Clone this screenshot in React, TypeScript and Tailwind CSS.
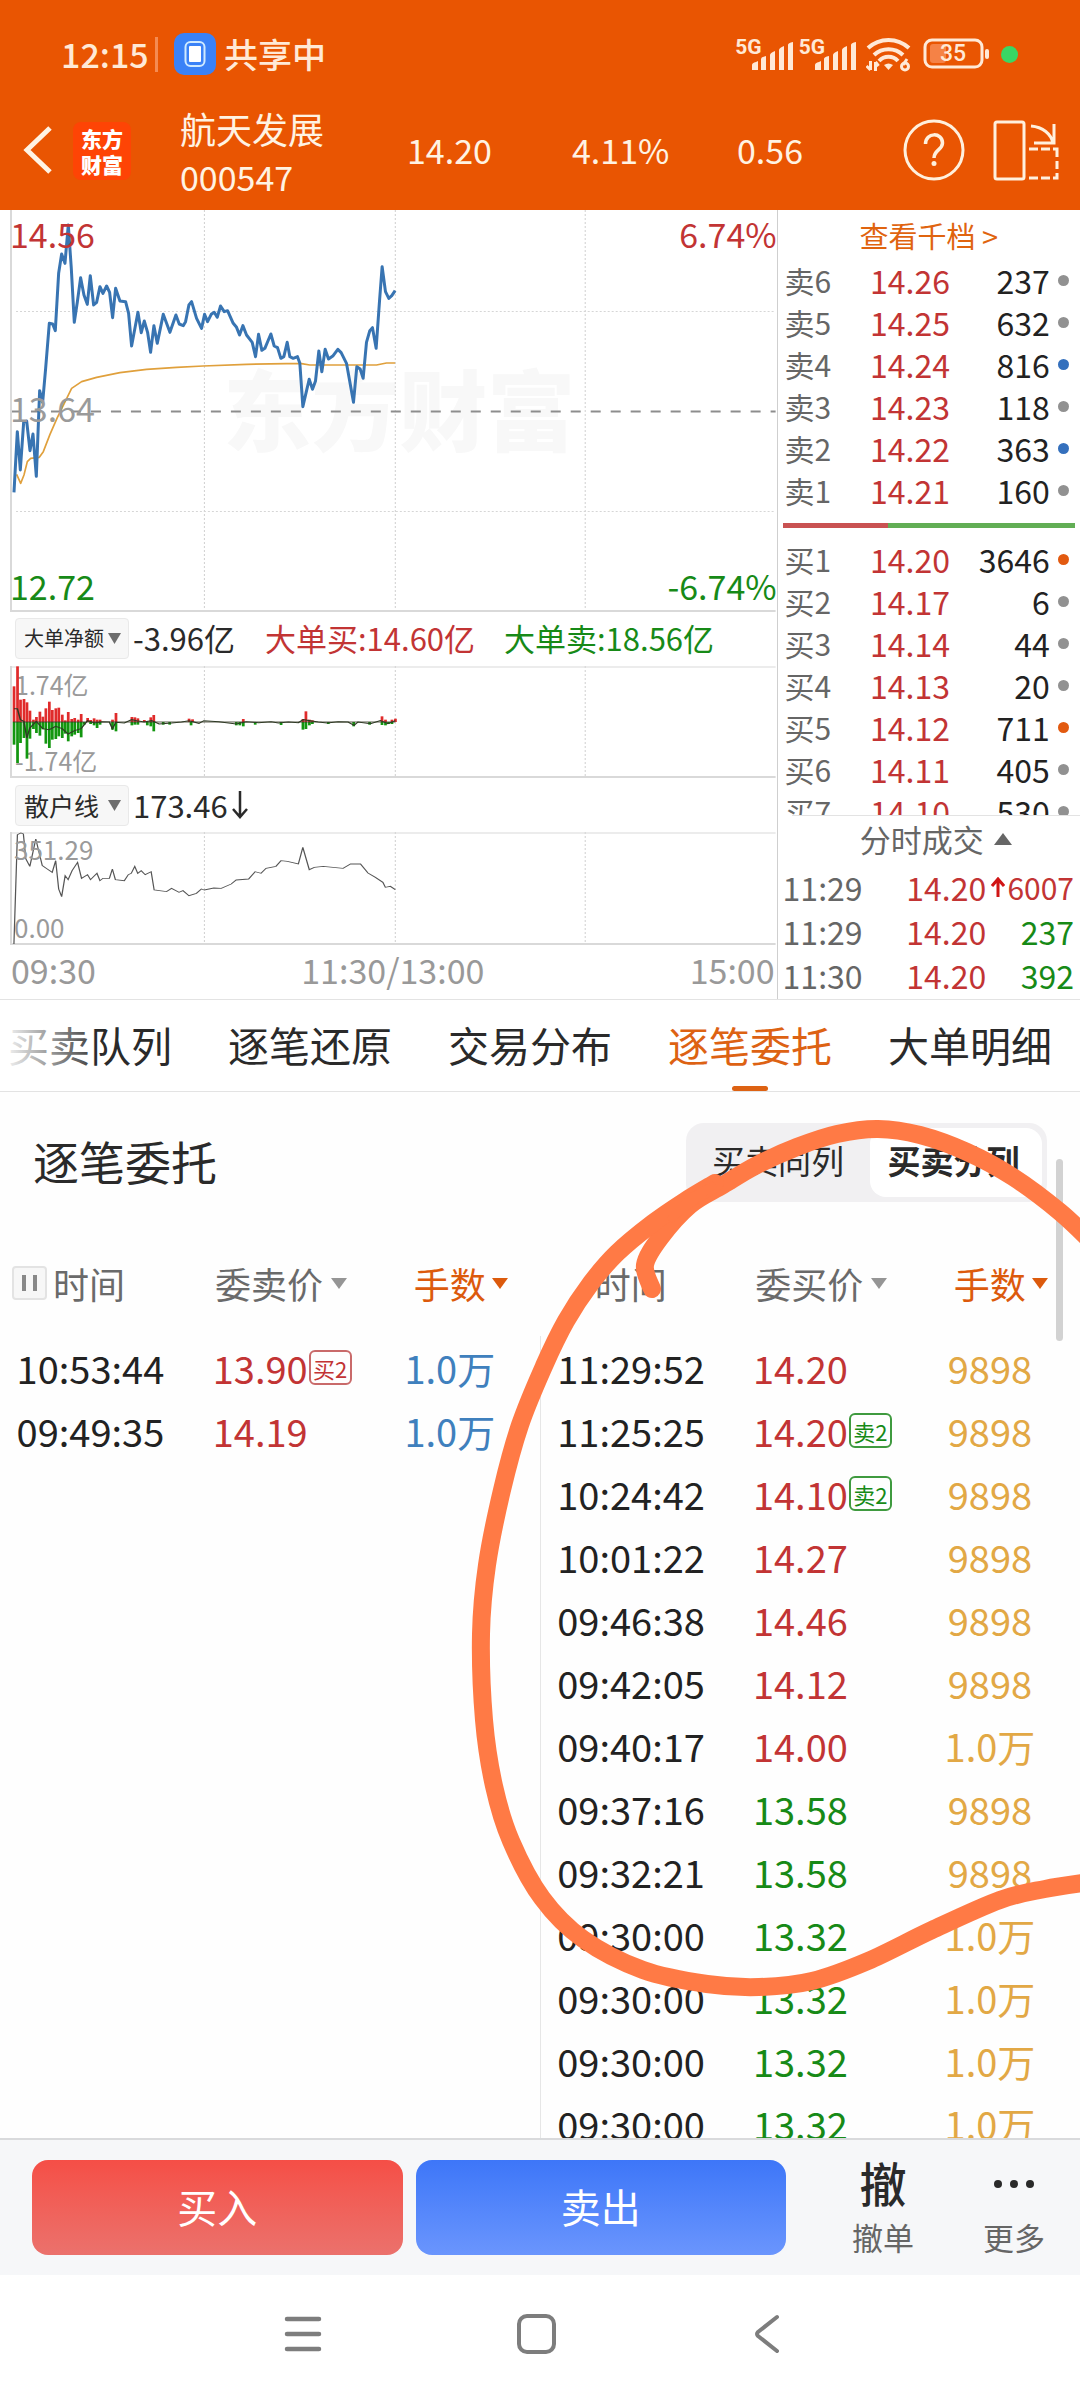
import React from "react";

type Pt = [number, number];

const parse = (s: string): Pt[] => s.split(" ").map((p) => p.split(",").map(Number) as Pt);

const smooth = (pts: Pt[]): string => {
  let d = `M${pts[0][0]} ${pts[0][1]}`;
  for (let i = 0; i < pts.length - 1; i++) {
    const p0 = pts[i - 1] ?? pts[i];
    const p1 = pts[i];
    const p2 = pts[i + 1];
    const p3 = pts[i + 2] ?? p2;
    d += `C${p1[0] + (p2[0] - p0[0]) / 6} ${p1[1] + (p2[1] - p0[1]) / 6} ${p2[0] - (p3[0] - p1[0]) / 6} ${p2[1] - (p3[1] - p1[1]) / 6} ${p2[0]} ${p2[1]}`;
  }
  return d;
};

const PRICE =
  "42,862 52,680 61,795 71,652 80,648 90,737 99,687 109,814 119,557 128,592 137,490 148,355 158,357 166,377 176,205 185,147 195,175 205,60 214,190 223,352 232,292 242,218 252,270 262,298 271,212 281,300 290,292 300,245 309,265 320,243 329,262 338,338 347,250 360,288 377,290 386,325 395,423 414,322 424,383 433,348 443,382 452,442 462,362 472,415 490,328 510,382 528,330 538,357 550,362 557,350 567,300 575,290 590,340 605,370 614,328 623,350 634,328 643,322 652,337 662,303 673,320 683,317 700,355 710,367 719,390 729,362 740,390 757,412 767,455 776,388 786,436 795,430 813,387 823,423 833,428 843,460 852,455 862,412 870,455 880,460 893,455 900,475 909,605 928,523 938,553 947,528 957,438 966,500 976,433 986,462 1000,452 1014,433 1024,443 1040,475 1050,530 1061,592 1071,485 1081,492 1090,520 1100,412 1110,377 1118,368 1129,430 1139,290 1147,185 1157,260 1167,280 1176,272 1186,257";
const AVERAGE =
  "50,808 62,835 72,810 82,770 92,760 118,757 130,740 150,688 172,638 215,550 245,530 290,517 360,503 440,493 530,487 610,483 740,478 860,476 905,476 930,480 1130,480 1160,474 1186,474";
const BUY_BARS = parse(
  "28,245 35,185 41,285 48,283 54,293 60,318 67,345 73,337 80,321 86,336 92,311 99,291 105,316 112,311 118,309 125,330 131,347 137,322 144,343 150,340 157,345 163,328 176,340 182,346 189,341 195,345 201,345 226,345 233,325 265,337 271,338 277,341 290,346 303,338 309,331 380,342 387,344 489,343 609,343 615,320 622,345 628,347 768,335 775,345 788,345 795,342"
);
const SELL_BARS = parse(
  "28,420 35,475 41,415 48,400 54,462 60,402 67,373 73,385 80,393 86,374 92,417 99,430 105,405 112,403 118,395 125,400 131,387 137,410 144,395 150,390 157,385 163,398 169,360 182,358 189,362 195,370 201,360 226,375 233,380 265,362 271,360 277,360 296,362 303,365 309,380 328,360 341,360 384,362 475,362 482,362 489,365 513,360 565,361 609,375 615,373 622,362 628,358 660,358 711,365 743,360 768,361 775,362 781,358 788,358"
);
const NET =
  "28,312 35,312 41,345 48,350 54,400 60,370 73,350 86,372 99,375 112,365 125,372 137,388 150,378 163,372 176,348 190,355 205,351 220,352 226,372 233,353 250,355 265,345 275,348 290,352 305,348 320,358 345,355 365,352 380,348 400,356 410,348 440,351 475,358 495,351 520,354 545,351 560,355 580,352 600,354 610,345 640,352 658,355 680,351 700,352 712,362 720,352 745,357 765,348 780,357 795,348";
const RETAIL =
  "28,1020 35,692 42,687 47,690 52,765 60,787 72,705 85,785 95,795 105,805 112,770 118,855 124,878 131,815 137,827 145,800 156,775 164,823 176,812 182,827 195,808 201,830 207,823 220,823 226,795 232,827 250,830 258,812 264,808 271,787 277,808 284,800 292,812 304,803 310,858 335,863 345,853 360,865 368,860 380,875 395,868 405,855 411,858 430,852 445,853 465,840 475,828 500,825 513,803 525,808 535,793 555,787 565,770 578,772 600,780 609,730 622,797 632,790 650,787 690,793 705,780 725,780 740,807 755,820 770,835 775,850 785,847 795,857";

const STROKE_A = smooth(
  parse("652,1289 645,1265 660,1238 690,1205 723,1185 757,1165 797,1147 837,1134 878,1129 920,1135 967,1152 1013,1177 1060,1212 1095,1245")
);
const STROKE_B = smooth(
  parse(
    "715,1183 685,1201 653,1223 617,1253 591,1283 566,1321 544,1366 520,1425 502,1490 487,1565 481,1634 484,1720 494,1786 511,1841 542,1898 583,1939 643,1970 707,1984 759,1987 812,1981 868,1961 932,1930 1000,1900 1045,1889 1090,1882"
  )
);

const SELLS: [string, string, string, string][] = [
  ["卖6", "14.26", "237", "g"],
  ["卖5", "14.25", "632", "g"],
  ["卖4", "14.24", "816", "b"],
  ["卖3", "14.23", "118", "g"],
  ["卖2", "14.22", "363", "b"],
  ["卖1", "14.21", "160", "g"],
];
const BUYS: [string, string, string, string][] = [
  ["买1", "14.20", "3646", "o"],
  ["买2", "14.17", "6", "g"],
  ["买3", "14.14", "44", "g"],
  ["买4", "14.13", "20", "g"],
  ["买5", "14.12", "711", "o"],
  ["买6", "14.11", "405", "g"],
  ["买7", "14.10", "530", "g"],
];
const DOT: Record<string, string> = { g: "bg-[#919191]", b: "bg-[#3470bd]", o: "bg-[#e25a10]" };

type Order = { time: string; price: string; up: boolean; badge?: string; lots: string };
const SELL_ORDERS: Order[] = [
  { time: "10:53:44", price: "13.90", up: true, badge: "买2", lots: "1.0万" },
  { time: "09:49:35", price: "14.19", up: true, lots: "1.0万" },
];
const BUY_ORDERS: Order[] = [
  { time: "11:29:52", price: "14.20", up: true, lots: "9898" },
  { time: "11:25:25", price: "14.20", up: true, badge: "卖2", lots: "9898" },
  { time: "10:24:42", price: "14.10", up: true, badge: "卖2", lots: "9898" },
  { time: "10:01:22", price: "14.27", up: true, lots: "9898" },
  { time: "09:46:38", price: "14.46", up: true, lots: "9898" },
  { time: "09:42:05", price: "14.12", up: true, lots: "9898" },
  { time: "09:40:17", price: "14.00", up: true, lots: "1.0万" },
  { time: "09:37:16", price: "13.58", up: false, lots: "9898" },
  { time: "09:32:21", price: "13.58", up: false, lots: "9898" },
  { time: "09:30:00", price: "13.32", up: false, lots: "1.0万" },
  { time: "09:30:00", price: "13.32", up: false, lots: "1.0万" },
  { time: "09:30:00", price: "13.32", up: false, lots: "1.0万" },
  { time: "09:30:00", price: "13.32", up: false, lots: "1.0万" },
];

const Signal = () => (
  <div className="flex h-[34px] items-start text-[#ffe9d6]">
    <span className="font-[Roboto,sans-serif] text-[21px] font-bold leading-[20px]">5G</span>
    <svg className="-ml-[10px] h-[34px] w-[42px]" viewBox="0 0 42 34" fill="currentColor">
      <path d="M0 33v-5q0-2 4-3l2-1v9zM9 33V22q0-2 5-3v14zM18 33V18q0-2 5-4v19zM27 33V13q0-2 5-4v24zM36 33V8q0-2 5-3v28z" />
    </svg>
  </div>
);

const StatusBar = () => (
  <div className="flex h-[108px] items-center pl-[61px] pr-[62px] text-[#ffe9d6]">
    <span className="w-[82px] text-[34px] font-medium leading-none">12:15</span>
    <span className="ml-3 h-[35px] w-[3px] bg-[#f58b52]" />
    <svg className="ml-[16px] size-[42px]" viewBox="0 0 42 42">
      <rect width="42" height="42" rx="10" fill="#3a82f7" />
      <rect x="11.5" y="9" width="19" height="24" rx="5" fill="none" stroke="#cfeaff" strokeWidth="2" />
      <rect x="15" y="13" width="12" height="16" rx="1" fill="#fff" />
    </svg>
    <span className="ml-[8px] text-[34px] font-medium leading-none">共享中</span>
    <div className="ml-auto flex items-center">
      <Signal />
      <div className="w-[5px]" />
      <Signal />
      <svg className="ml-[9px] h-[36px] w-[46px]" viewBox="0 0 46 36" fill="none" stroke="#ffe9d6" strokeWidth="4">
        <path d="M2 12a30 30 0 0 1 41 0" />
        <path d="M8 19a21 21 0 0 1 29 0" />
        <path d="M13 25a13 13 0 0 1 19 0" />
        <path d="M18 29q4.500-3 9 0l-4.500 5z" fill="#ffe9d6" stroke="none" />
        <path d="M4.500 25v9m0 0l-4-4M9.500 35v-9m0 0l3 4" strokeWidth="3" />
        <path d="M41 23l-4 6" strokeWidth="3" />
        <circle cx="39" cy="30.500" r="3.500" strokeWidth="3" />
      </svg>
      <div className="relative ml-[11px] h-[32px] w-[68px]">
        <svg className="h-[32px] w-[68px]" viewBox="0 0 68 32">
          <rect x="2" y="2" width="57" height="27" rx="7" fill="none" stroke="#ffe9d6" strokeWidth="3" />
          <rect x="7" y="6" width="16" height="19" rx="3" fill="#f58246" />
          <rect x="62" y="11" width="4" height="10" rx="2" fill="#ffe9d6" />
        </svg>
        <span className="absolute inset-0 pr-[8px] text-center font-[Roboto,sans-serif] text-[23px] font-medium leading-[31px]">35</span>
      </div>
      <span className="ml-[10px] size-[17px] rounded-full bg-[#3ad764]" />
    </div>
  </div>
);

const Header = () => (
  <header className="flex h-[102px] items-start pl-[22px] pr-[20px] text-[#fff3e3]">
    <button aria-label="返回" className="mt-[17px]">
      <svg className="h-[50px] w-[32px]" viewBox="0 0 32 50" fill="none" stroke="#fff3e3" strokeWidth="5">
        <path d="M28 3L5 25l23 22" />
      </svg>
    </button>
    <div className="ml-[19px] mt-[14px] flex size-[58px] flex-col items-center justify-center rounded-lg bg-[#fe4405] text-[21px] font-black leading-[26px] text-white">
      <span>东方</span>
      <span>财富</span>
    </div>
    <div className="ml-[49px] w-[227px]">
      <div className="text-[36px] leading-[40px]">航天发展</div>
      <div className="mt-1 text-[34px] leading-[50px]">000547</div>
    </div>
    <div className="flex flex-1 pt-[18px] text-[34px] leading-[48px]">
      <span className="w-[165px]">14.20</span>
      <span className="w-[165px]">4.11%</span>
      <span>0.56</span>
    </div>
    <button aria-label="帮助" className="mt-[11px]">
      <svg className="size-[62px]" viewBox="0 0 62 62" fill="none" stroke="#fff0dd" strokeWidth="3">
        <circle cx="31" cy="31" r="29" />
        <path d="M22.500 25c0-12 17-12 17-1 0 7-8.500 7-8.500 15" strokeWidth="3.500" />
        <circle cx="31" cy="44.500" r="2.500" fill="#fff0dd" stroke="none" />
      </svg>
    </button>
    <button aria-label="横屏" className="ml-[27px] mt-[11px]">
      <svg className="h-[62px] w-[68px]" viewBox="0 0 68 62" fill="none" stroke="#fff0dd" strokeWidth="3">
        <rect x="3" y="3" width="29" height="57" rx="2" />
        <path d="M37 30h9M49 30h9M61 30h4v8M65 42v8M65 54v5h-4M58 59h-9M46 59h-9" />
        <path d="M39 7c12 1 20 8 22 17M62 5v19H42" />
      </svg>
    </button>
  </header>
);

const Grid = ({ h }: { h: number }) => (
  <g stroke="#cfcfcf" strokeWidth="1" strokeDasharray="2 2">
    <path d={`M204.500 0V${h}M395.500 0V${h}M585.500 0V${h}`} />
  </g>
);

const Frame = ({ h, top }: { h: number; top: boolean }) => (
  <g fill="none" stroke="#d9d9d9" strokeWidth="2">
    <path d={`M11 0V${h - 1}H776`} />
    {top && <path d="M11 1H776" strokeWidth="1" />}
  </g>
);

const Picker = ({ label, size }: { label: string; size: string }) => (
  <button className="flex h-[41px] w-[114px] items-center justify-between rounded border border-[#e9e9e9] bg-[#f7f7f7] pl-2 pr-[7px] text-[#2a2a2a]">
    <span className={size}>{label}</span>
    <svg className="h-[11px] w-[13px]" viewBox="0 0 13 11" fill="#6d6d6d">
      <path d="M0 0h13L6.500 11z" />
    </svg>
  </button>
);

const Charts = () => (
  <section className="min-w-0 flex-1 border-r border-[#cfcfcf] bg-white">
    <div className="relative h-[402px]">
      <div className="absolute inset-x-0 top-[132px] pl-[22px] text-center text-[88px] font-black leading-[128px] text-[#f8f8f8]">东方财富</div>
      <svg className="absolute inset-0 h-full w-full" viewBox="0 0 777 402" preserveAspectRatio="none">
        <Grid h={402} />
        <path d="M16 101.500H776M16 301.500H776" stroke="#d6d6d6" strokeDasharray="2 2" />
        <path d="M11 201.500H776" stroke="#8d8d8d" strokeWidth="2" strokeDasharray="10 10" />
        <Frame h={402} top={false} />
        <g transform="translate(0 -5) scale(.33333)" fill="none" strokeLinejoin="round">
          <polyline points={AVERAGE} stroke="#e0a03c" strokeWidth="5" />
          <polyline points={PRICE} stroke="#3874b2" strokeWidth="9" />
        </g>
      </svg>
      <div className="absolute left-[10px] right-0 top-0 flex justify-between text-[34px] leading-[48px] text-[#c23434]">
        <span>14.56</span>
        <span>6.74%</span>
      </div>
      <div className="absolute left-[10px] top-[174px] text-[34px] leading-[48px] text-[#9a9a9a]">13.64</div>
      <div className="absolute bottom-[2px] left-[10px] right-0 flex justify-between text-[34px] leading-[48px] text-[#178a17]">
        <span>12.72</span>
        <span>-6.74%</span>
      </div>
    </div>
    <div className="flex h-[54px] items-center whitespace-nowrap pb-[2px] pl-[15px] text-[31px] leading-[44px] text-[#2a2a2a]">
      <Picker label="大单净额" size="text-[20px]" />
      <span className="ml-1 w-[132px]">-3.96亿</span>
      <span className="w-[239px] text-[#c23434]">大单买:14.60亿</span>
      <span className="text-[#178a17]">大单卖:18.56亿</span>
    </div>
    <div className="relative h-[112px]">
      <svg className="absolute inset-0 h-full w-full" viewBox="0 0 777 112" preserveAspectRatio="none">
        <Grid h={112} />
        <Frame h={112} top />
      </svg>
      <div className="absolute left-[15px] top-0 text-[25px] leading-[36px] text-[#9a9a9a]">1.74亿</div>
      <div className="absolute bottom-0 left-[15px] text-[25px] leading-[36px] text-[#9a9a9a]">-1.74亿</div>
      <svg className="absolute inset-0 h-full w-full" viewBox="0 0 777 112" preserveAspectRatio="none">
        <g transform="scale(.4975 .33333) translate(0 -184)">
          {BUY_BARS.map(([x, y]) => (
            <rect key={x} x={x - 2.5} y={y} width="5.500" height={352 - y} fill="#e02b2b" />
          ))}
          {SELL_BARS.map(([x, y]) => (
            <rect key={x} x={x - 2.5} y={352} width="5.500" height={y - 352} fill="#12960f" />
          ))}
          <path d="M26 352H795" stroke="#3d3d2c" strokeWidth="2" />
          <polyline points={NET} fill="none" stroke="#2f3a25" strokeWidth="3" />
        </g>
      </svg>
    </div>
    <div className="flex h-[54px] items-center pl-[15px] text-[31px] leading-[44px] text-[#2a2a2a]">
      <Picker label="散户线" size="text-[25px]" />
      <span className="ml-1">173.46</span>
      <svg className="ml-[4px] h-[28px] w-[16px]" viewBox="0 0 16 28" fill="none" stroke="#2a2a2a" strokeWidth="2.500">
        <path d="M8 0v26M1 18l7 8 7-8" />
      </svg>
    </div>
    <div className="relative h-[113px]">
      <svg className="absolute inset-0 h-full w-full" viewBox="0 0 777 113" preserveAspectRatio="none">
        <Grid h={113} />
        <Frame h={113} top />
        <g transform="scale(.4975 .33333) translate(0 -684)">
          <polyline points={RETAIL} fill="none" stroke="#555" strokeWidth="2.500" />
        </g>
      </svg>
      <div className="absolute left-[14px] top-0 text-[26px] leading-[34px] text-[#9a9a9a]">351.29</div>
      <div className="absolute bottom-0 left-[14px] text-[26px] leading-[36px] text-[#9a9a9a]">0.00</div>
    </div>
    <div className="flex h-[53px] justify-between pl-[11px] pr-[2px] text-[34px] leading-[50px] text-[#999]">
      <span>09:30</span>
      <span>11:30/13:00</span>
      <span>15:00</span>
    </div>
  </section>
);

const Levels = ({ rows }: { rows: [string, string, string, string][] }) => (
  <table className="w-full table-fixed text-[32px] leading-[42px]">
    <colgroup>
      <col className="w-[20%]" />
      <col className="w-[37%]" />
      <col className="w-[33%]" />
      <col className="w-[10%]" />
    </colgroup>
    <tbody>
      {rows.map(([name, price, qty, dot]) => (
        <tr key={name} className="h-[42px]">
          <td className="whitespace-nowrap p-0 pl-[7px] text-[30px] text-[#666]">{name}</td>
          <td className="p-0 text-right text-[#c23434]">{price}</td>
          <td className="p-0 text-right text-[#222]">{qty}</td>
          <td className="p-0 pl-[8px]">
            <span className={`block size-[11px] rounded-full ${DOT[dot]}`} />
          </td>
        </tr>
      ))}
    </tbody>
  </table>
);

const OrderBook = () => (
  <aside className="flex w-[28%] flex-col bg-white">
    <a href="#depth" className="block h-[49px] text-center text-[29px] leading-[50px] text-[#e0640f]">
      查看千档 &gt;
    </a>
    <Levels rows={SELLS} />
    <div className="mx-[5px] mb-[10px] mt-[12px] flex h-[5px]">
      <div className="w-[36%] bg-[#c95252]" />
      <div className="flex-1 bg-[#62ae55]" />
    </div>
    <div className="h-[277px] overflow-hidden">
      <Levels rows={BUYS} />
    </div>
    <button className="ml-[14px] flex h-[50px] items-center justify-center gap-[10px] border-t border-[#e3e3e3] pb-1 text-[31px] leading-[44px] text-[#666]">
      <span>分时成交</span>
      <svg className="h-[12px] w-[18px]" viewBox="0 0 18 12" fill="#666">
        <path d="M9 0l9 12H0z" />
      </svg>
    </button>
    <table className="w-full table-fixed text-[32px] leading-[44px]">
      <colgroup>
        <col className="w-[36%]" />
        <col className="w-[33%]" />
        <col className="w-[31%]" />
      </colgroup>
      <tbody className="text-right">
        <tr className="h-[44px]">
          <td className="p-0 pl-[5px] text-left text-[#666]">11:29</td>
          <td className="p-0 text-[#c23434]">14.20</td>
          <td className="p-0 pr-[6px] text-[30px] text-[#c23434]">
            <span className="flex items-center justify-end gap-[2px]">
              <svg className="h-[20px] w-[14px]" viewBox="0 0 14 20" fill="none" stroke="#d01515" strokeWidth="3">
                <path d="M7 20V2M1 9l6-7 6 7" />
              </svg>
              6007
            </span>
          </td>
        </tr>
        <tr className="h-[44px]">
          <td className="p-0 pl-[5px] text-left text-[#666]">11:29</td>
          <td className="p-0 text-[#c23434]">14.20</td>
          <td className="p-0 pr-[6px] text-[#178a17]">237</td>
        </tr>
        <tr className="h-[44px]">
          <td className="p-0 pl-[5px] text-left text-[#666]">11:30</td>
          <td className="p-0 text-[#c23434]">14.20</td>
          <td className="p-0 pr-[6px] text-[#178a17]">392</td>
        </tr>
      </tbody>
    </table>
  </aside>
);

const Tabs = () => (
  <nav className="relative flex h-[93px] items-start justify-between whitespace-nowrap border-b border-t border-[#e3e3e3] bg-white pl-[8px] pr-[28px] pt-[14px] text-[41px] leading-[60px] text-[#2a2a2a]">
    <button>买卖队列</button>
    <button>逐笔还原</button>
    <button>交易分布</button>
    <button className="relative text-[#dd6213]">
      逐笔委托
      <span className="absolute -bottom-[17px] left-1/2 h-[5px] w-[36px] -translate-x-1/2 rounded bg-[#dd6213]" />
    </button>
    <button>大单明细</button>
    <div className="pointer-events-none absolute inset-y-0 left-0 w-[95px] bg-gradient-to-r from-white to-white/10" />
  </nav>
);

const Caret = ({ color }: { color: string }) => (
  <svg className="h-[11px] w-[16px]" viewBox="0 0 16 11" fill={color}>
    <path d="M0 0h16L8 11z" />
  </svg>
);

const Orders = ({ side, rows, pause }: { side: string; rows: Order[]; pause?: boolean }) => (
  <table className="w-full table-fixed border-collapse self-start whitespace-nowrap text-[38px] leading-[60px]">
    <colgroup>
      <col className="w-[33.500%]" />
      <col className="w-[32%]" />
      <col className="w-[34.500%]" />
    </colgroup>
    <thead>
      <tr className="h-[104px] text-[36px] text-[#6a6a6a]">
        <th className="p-0 pb-[2px] font-normal">
          {pause ? (
            <div className="flex items-center gap-[6px] pl-[12px]">
              <button aria-label="暂停" className="flex h-[34px] w-[35px] items-center justify-center gap-[7px] rounded border-2 border-[#e3e3e3] bg-[#f7f7f7]">
                <span className="h-[16px] w-[4px] bg-[#888]" />
                <span className="h-[16px] w-[4px] bg-[#888]" />
              </button>
              时间
            </div>
          ) : (
            "时间"
          )}
        </th>
        <th className="p-0 pb-[2px] font-normal">
          <button className="flex items-center gap-2 pl-[34px]">
            {side}
            <Caret color="#959595" />
          </button>
        </th>
        <th className="p-0 pb-[2px] font-normal">
          <button className="flex items-center gap-[6px] pl-[60px] text-[#dc5a0c]">
            手数
            <Caret color="#dc5a0c" />
          </button>
        </th>
      </tr>
    </thead>
    <tbody>
      {rows.map((r, i) => (
        <tr key={i} className="h-[63px]">
          <td className={pause ? "p-0 text-center text-[#222]" : "border-l border-[#e6e6e6] p-0 text-center text-[#222]"}>{r.time}</td>
          <td className="p-0">
            <div className={r.up ? "flex items-center text-[#c23434]" : "flex items-center text-[#178a17]"}>
              <span className="flex-1 text-right">{r.price}</span>
              <span className="flex w-[46px] pl-[1px]">
                {r.badge && (
                  <span
                    className={
                      pause
                        ? "flex h-[35px] w-[43px] items-center justify-center rounded-md border-2 border-[#c96a6a] text-[22px] text-[#c23434]"
                        : "flex h-[35px] w-[43px] items-center justify-center rounded-md border-2 border-[#3f9a3f] text-[22px] text-[#178a17]"
                    }
                  >
                    {r.badge}
                  </span>
                )}
              </span>
            </div>
          </td>
          <td className={pause ? "p-0 pl-[6px] text-center text-[#3f80bd]" : "p-0 pl-[6px] text-center text-[#e2a845]"}>{r.lots}</td>
        </tr>
      ))}
    </tbody>
  </table>
);

export default function App() {
  return (
    <div className="relative flex h-screen flex-col overflow-hidden bg-[#fefefe] font-['Noto_Sans_CJK_SC',sans-serif]">
      <div className="bg-[#e95502]">
        <StatusBar />
        <Header />
      </div>
      <div className="flex h-[789px]">
        <Charts />
        <OrderBook />
      </div>
      <Tabs />
      <main className="relative flex min-h-0 flex-1 flex-col overflow-hidden">
        <div className="flex h-[140px] shrink-0 items-center justify-between pl-[33px] pr-[33px]">
          <h2 className="pb-1 text-[46px] leading-[66px] text-[#2a2a2a]">逐笔委托</h2>
          <div className="flex h-[79px] w-[361px] rounded-[18px] bg-[#f1f0f2] p-[5px] text-[33px] leading-[60px] text-[#2a2a2a]">
            <button className="flex-1 pb-[5px] pr-[5px]">买卖同列</button>
            <button className="w-[172px] rounded-[16px] bg-white pb-[5px] pr-[5px] font-bold">买卖分列</button>
          </div>
        </div>
        <div className="grid grid-cols-2">
          <Orders side="委卖价" rows={SELL_ORDERS} pause />
          <Orders side="委买价" rows={BUY_ORDERS} />
        </div>
        <div className="absolute right-[17px] top-[67px] h-[182px] w-[7px] rounded-full bg-[#d2d2d2]" />
      </main>
      <footer className="flex h-[137px] shrink-0 items-start border-t-2 border-[#d9dadc] bg-[#f6f7f9] pl-[32px] pt-[20px]">
        <button className="h-[95px] flex-1 rounded-[16px] bg-gradient-to-b from-[#f54e46] to-[#eb716c] pb-1 text-[40px] text-white">买入</button>
        <button className="ml-[13px] h-[95px] flex-1 rounded-[16px] bg-gradient-to-b from-[#3d76f8] to-[#6a95fd] pb-1 text-[40px] text-white">卖出</button>
        <button className="ml-[32px] flex w-[130px] flex-col items-center text-[#2a2a2a]">
          <span className="text-[47px] font-medium leading-[44px]">撤</span>
          <span className="mt-[13px] text-[31px] leading-[40px] text-[#666]">撤单</span>
        </button>
        <button className="flex w-[132px] flex-col items-center text-[#2a2a2a]">
          <span className="flex h-[48px] items-center gap-2">
            <span className="size-2 rounded-full bg-[#2a2a2a]" />
            <span className="size-2 rounded-full bg-[#2a2a2a]" />
            <span className="size-2 rounded-full bg-[#2a2a2a]" />
          </span>
          <span className="mt-[9px] text-[31px] leading-[40px] text-[#666]">更多</span>
        </button>
      </footer>
      <div className="flex h-[125px] shrink-0 items-center justify-between bg-white pb-[8px] pl-[283px] pr-[298px]">
        <button aria-label="最近任务">
          <svg className="size-[40px]" viewBox="0 0 40 40" stroke="#7d7d7d" strokeWidth="4.500" strokeLinecap="round">
            <path d="M4 5h32M4 20h32M4 35h32" />
          </svg>
        </button>
        <button aria-label="主屏幕" className="pr-1">
          <svg className="size-[42px]" viewBox="0 0 42 42" fill="none" stroke="#7d7d7d" strokeWidth="4">
            <rect x="4" y="3" width="35" height="36" rx="8" />
          </svg>
        </button>
        <button aria-label="后退">
          <svg className="h-[42px] w-[30px]" viewBox="0 0 30 42" fill="none" stroke="#7d7d7d" strokeWidth="4" strokeLinecap="round" strokeLinejoin="round">
            <path d="M25 4L6 19q-2 2 0 4l19 15" />
          </svg>
        </button>
      </div>
      <svg className="pointer-events-none absolute inset-0 h-full w-full" viewBox="0 0 1080 2400" preserveAspectRatio="none" fill="none" stroke="#ff7a45" strokeWidth="18" strokeLinecap="round" strokeLinejoin="round">
        <path d={STROKE_A} />
        <path d={STROKE_B} />
        <path d="M712 1186L672 1218L690 1198z" fill="#ff7a45" strokeWidth="8" />
      </svg>
    </div>
  );
}
